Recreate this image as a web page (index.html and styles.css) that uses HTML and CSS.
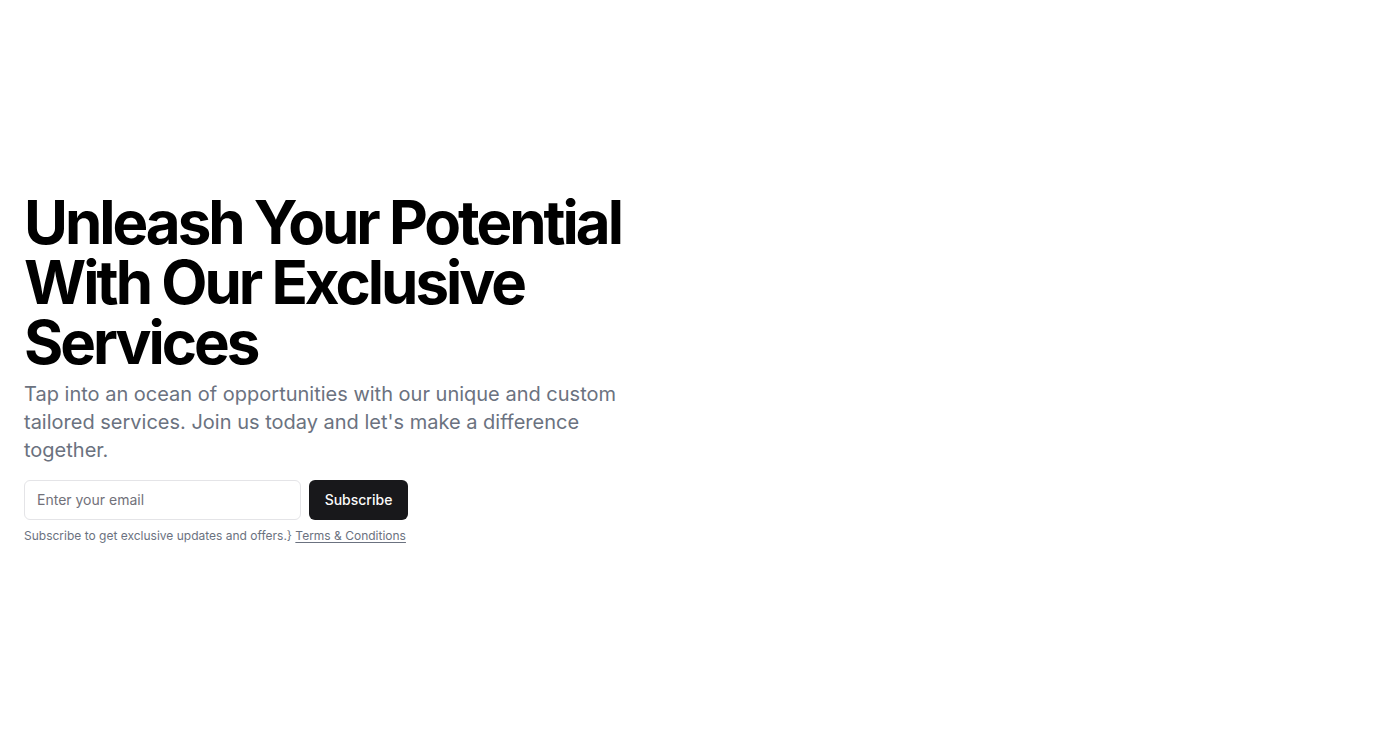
FILE: index.html
```html
<!DOCTYPE html>
<html lang="en">
<head>
<meta charset="utf-8">
<title>Unleash Your Potential</title>
<link rel="stylesheet" href="styles.css">
</head>
<body>
<main class="page">
  <section class="hero">
    <div class="copy">
      <h1 class="title">Unleash Your Potential With Our Exclusive Services</h1>
      <p class="lead">Tap into an ocean of opportunities with our unique and custom tailored services. Join us today and let's make a difference together.</p>
    </div>
    <div class="signup">
      <form class="form">
        <input class="email" type="email" placeholder="Enter your email">
        <button class="btn" type="submit">Subscribe</button>
      </form>
      <p class="note">Subscribe to get exclusive updates and offers.} <a class="link" href="#">Terms &amp; Conditions</a></p>
    </div>
  </section>
</main>
</body>
</html>
```
FILE: styles.css
```css
* { box-sizing: border-box; }
html, body { margin: 0; padding: 0; background: #fff; }
body { font-family: Inter, "Noto Sans", sans-serif; color: #09090b; }
.page {
  min-height: 734px;
  display: flex;
  align-items: center;
  padding: 0 24px;
}
.hero {
  display: flex;
  flex-direction: column;
  gap: 16px;
  width: 100%;
}
.copy { display: flex; flex-direction: column; gap: 8px; }
.title {
  margin: 0;
  font-size: 60px;
  line-height: 60px;
  font-weight: 700;
  letter-spacing: -0.05em;
  max-width: 620px;
  color: #000;
}
.lead {
  margin: 0;
  max-width: 600px;
  font-size: 20px;
  line-height: 28px;
  color: #6b7280;
}
.signup { display: flex; flex-direction: column; gap: 8px; max-width: 384px; margin-bottom: -1px; }
.form { display: flex; gap: 8px; margin: 0; }
.email {
  flex: 1;
  min-width: 0;
  height: 40px;
  border: 1px solid #e4e4e7;
  border-radius: 6px;
  padding: 8px 12px;
  font-family: inherit;
  font-size: 14px;
  color: #09090b;
  background: #fff;
}
.email::placeholder { color: #71717a; }
.btn {
  width: 99px;
  height: 40px;
  padding: 0;
  border: 0;
  border-radius: 6px;
  background: #18181b;
  color: #fafafa;
  font-family: inherit;
  font-size: 14px;
  font-weight: 500;
}
.note {
  margin: 0;
  font-size: 12px;
  line-height: 16px;
  color: #6b7280;
}
.link { color: #6b7280; text-decoration: underline; text-underline-offset: 2px; }
```
